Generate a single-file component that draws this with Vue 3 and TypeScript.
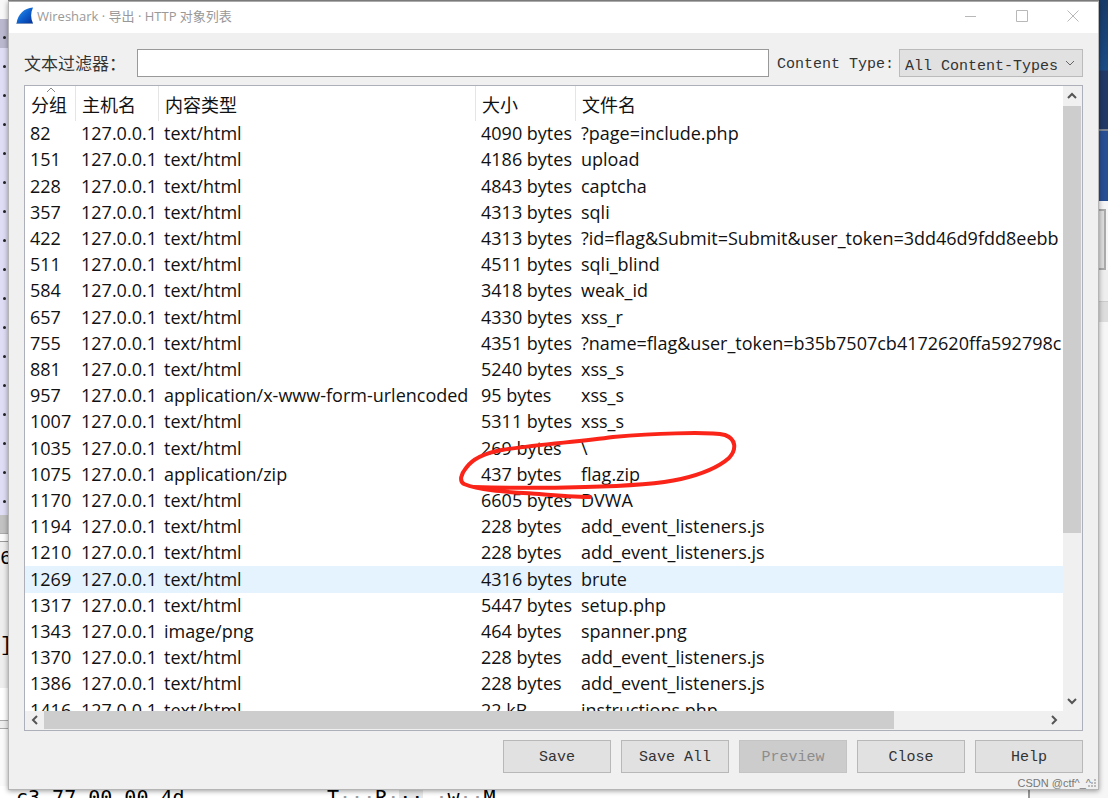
<script setup lang="ts">
import { ref } from 'vue'

type Row = [number, string, string, string]

const rows: Row[] = [
  [82, 'text/html', '4090 bytes', '?page=include.php'],
  [151, 'text/html', '4186 bytes', 'upload'],
  [228, 'text/html', '4843 bytes', 'captcha'],
  [357, 'text/html', '4313 bytes', 'sqli'],
  [422, 'text/html', '4313 bytes', '?id=flag&Submit=Submit&user_token=3dd46d9fdd8eebb'],
  [511, 'text/html', '4511 bytes', 'sqli_blind'],
  [584, 'text/html', '3418 bytes', 'weak_id'],
  [657, 'text/html', '4330 bytes', 'xss_r'],
  [755, 'text/html', '4351 bytes', '?name=flag&user_token=b35b7507cb4172620ffa592798c'],
  [881, 'text/html', '5240 bytes', 'xss_s'],
  [957, 'application/x-www-form-urlencoded', '95 bytes', 'xss_s'],
  [1007, 'text/html', '5311 bytes', 'xss_s'],
  [1035, 'text/html', '269 bytes', '\\'],
  [1075, 'application/zip', '437 bytes', 'flag.zip'],
  [1170, 'text/html', '6605 bytes', 'DVWA'],
  [1194, 'text/html', '228 bytes', 'add_event_listeners.js'],
  [1210, 'text/html', '228 bytes', 'add_event_listeners.js'],
  [1269, 'text/html', '4316 bytes', 'brute'],
  [1317, 'text/html', '5447 bytes', 'setup.php'],
  [1343, 'image/png', '464 bytes', 'spanner.png'],
  [1370, 'text/html', '228 bytes', 'add_event_listeners.js'],
  [1386, 'text/html', '228 bytes', 'add_event_listeners.js'],
  [1416, 'text/html', '22 kB', 'instructions.php'],
]

const filter = ref('')
const active = ref(1269)
const actions = [
  { label: 'Save', disabled: false },
  { label: 'Save All', disabled: false },
  { label: 'Preview', disabled: true },
  { label: 'Close', disabled: false },
  { label: 'Help', disabled: false },
]
</script>

<template>
  <div class="desktop">
    <div class="behind-left" aria-hidden="true">
      <div class="packets"><i v-for="n in 17" :key="n"></i></div>
      <div class="track"></div>
      <div class="details"><span>6</span><span>]</span></div>
      <div class="blank"></div>
      <div class="rule"></div>
    </div>
    <div class="behind-right" aria-hidden="true">
      <div class="sky"></div>
      <div class="edge"></div>
      <div class="pale"></div>
      <div class="grey"></div>
    </div>
    <div class="behind-bottom" aria-hidden="true">
      <span class="hex">c3 77 00 00 4d</span>
      <span class="ascii">T<s>···</s>R<s>·</s><mark>··</mark> <s>·</s>w<s>··</s>M</span>
      <span class="pane"></span>
    </div>

    <main class="dialog">
      <header class="titlebar">
        <svg class="fin" viewBox="0 0 18 18" aria-hidden="true">
          <defs>
            <linearGradient id="fin-fill" x1="0" y1="0" x2="1" y2="1">
              <stop offset="0" stop-color="#3b9bf0" />
              <stop offset="0.5" stop-color="#0d62cf" />
              <stop offset="1" stop-color="#06309a" />
            </linearGradient>
          </defs>
          <path d="M.5 16.500C2 7 8 1.200 17 .5C14.500 6 14.500 11 17 16.500Z" fill="url(#fin-fill)" />
          <path d="M.5 16.500h16.500" stroke="#7891b8" stroke-width="1" />
        </svg>
        <h1>Wireshark · 导出 · HTTP 对象列表</h1>
        <button class="wbtn" aria-label="Minimize"><svg viewBox="0 0 12 12"><path d="M0 6.500h11" /></svg></button>
        <button class="wbtn" aria-label="Maximize"><svg viewBox="0 0 12 12"><path d="M.5.5h11v11H.5z" /></svg></button>
        <button class="wbtn" aria-label="Close window"><svg viewBox="0 0 12 12"><path d="M.5.5l11 11M11.500.5l-11 11" /></svg></button>
      </header>

      <section class="content">
        <div class="filters">
          <label class="zh" for="filter">文本过滤器：</label>
          <input id="filter" v-model="filter" type="text" />
          <label class="type" for="ctype">Content Type:</label>
          <div class="select">
            <select id="ctype"><option>All Content-Types</option></select>
            <svg viewBox="0 0 10 6" aria-hidden="true"><path d="M1 1l4 4 4-4" /></svg>
          </div>
        </div>

        <div class="tree">
          <div class="view">
            <table>
              <colgroup><col class="c1" /><col class="c2" /><col class="c3" /><col class="c4" /><col /></colgroup>
              <thead>
                <tr>
                  <th class="sorted">分组<svg viewBox="0 0 10 6" aria-hidden="true"><path d="M1 5l4-4 4 4" /></svg></th>
                  <th>主机名</th><th>内容类型</th><th>大小</th><th>文件名</th>
                </tr>
              </thead>
              <tbody>
                <tr v-for="r in rows" :key="r[0]" :class="{ active: r[0] === active }" @click="active = r[0]">
                  <td>{{ r[0] }}</td><td>127.0.0.1</td><td>{{ r[1] }}</td><td>{{ r[2] }}</td><td>{{ r[3] }}</td>
                </tr>
              </tbody>
            </table>
            <svg class="scribble" viewBox="0 0 280 70" aria-hidden="true">
              <path d="M15 56C45 57 90 57 126 56C170 55 200 53 222 48C248 42 262 34 270 27C278 18 277 8 266 4C248 0 190 3 154 6C120 11 80 13 43 19C26 22 14 27 7 37C2 43 0 50 5 53C22 60 50 61 80 63C102 65 118 66 131 66" />
            </svg>
          </div>
          <div class="vbar">
            <button aria-label="Scroll up"><svg viewBox="0 0 10 8"><path d="M1 6l4-4 4 4" /></svg></button>
            <div class="lane"><div class="thumb"></div></div>
            <button aria-label="Scroll down"><svg viewBox="0 0 10 8"><path d="M1 2l4 4 4-4" /></svg></button>
          </div>
          <div class="hbar">
            <button aria-label="Scroll left"><svg viewBox="0 0 8 10"><path d="M6 1L2 5l4 4" /></svg></button>
            <div class="lane"><div class="thumb"></div></div>
            <button aria-label="Scroll right"><svg viewBox="0 0 8 10"><path d="M2 1l4 4-4 4" /></svg></button>
          </div>
        </div>

        <footer>
          <button v-for="a in actions" :key="a.label" :disabled="a.disabled">{{ a.label }}</button>
        </footer>
      </section>
      <svg class="grip" viewBox="0 0 8 8" aria-hidden="true"><path d="M6 0h2v2H6zM3 3h2v2H3zM6 3h2v2H6zM0 6h2v2H0zM3 6h2v2H3zM6 6h2v2H6z" /></svg>
      <span class="watermark">CSDN @ctf^_^</span>
    </main>
  </div>
</template>

<style>
html, body, #app { height: 100%; }
body { overflow: hidden; }
</style>

<style scoped>
* { box-sizing: border-box; }
.desktop {
  position: relative;
  height: 100%;
  padding: 1px 9px 8px 8px;
  background: linear-gradient(#858585, #fff 12px);
  overflow: hidden;
}
button { padding: 0; font: inherit; }
svg { fill: none; }

.behind-left {
  position: absolute;
  inset: 0 auto 0 0;
  width: 8px;
  display: flex;
  flex-direction: column;
  background: #fafafa;
}
.packets {
  height: 515px;
  padding-top: 36px;
  background: linear-gradient(#f8f8f8 19px, #bab8ce 19px, #bab8ce 48px, #dfddf5 48px);
}
.packets i {
  display: block;
  width: 3px;
  height: 3px;
  margin: 0 0 26px 3px;
  border-radius: 50%;
  background: #222;
}
.track { height: 19px; background: #c2c2c2; border-bottom: 1px solid #aaa; }
.details {
  height: 147px;
  margin-top: 7px;
  padding-top: 3px;
  border-top: 1px solid #999;
  background: #eee;
  font: 20px/28px "Liberation Mono", monospace;
  display: flex;
  flex-direction: column;
  gap: 59px;
}
.blank { height: 32px; background: #fff; }
.rule { height: 9px; border: 1px solid #aaa; border-width: 1px 0; background: #eee; }

.behind-right {
  position: absolute;
  inset: 0 0 0 auto;
  width: 9px;
  display: flex;
  flex-direction: column;
  background: #f6f6f6;
}
.sky { height: 201px; background: linear-gradient(#173b68, #1b4c85 70px, #203966 71px, #203966 129px, #7a8392 129px, #7a8392 131px, #284f94 131px); }
.edge { height: 61px; margin: 8px 2px 0 0; border: 2px solid #aaa; border-left: 0; background: #ddd; }
.pale { height: 32px; border: 1px solid #ccc; border-width: 0 0 1px; background: #eee; }
.grey { height: 20px; background: #ddd; }

.behind-bottom {
  position: absolute;
  inset: auto 0 0 0;
  height: 12px;
  display: grid;
  grid-template-columns: 311px 1fr 80px;
  padding-left: 16px;
  background: #fff;
  color: #000;
  font: 20px/22px "DejaVu Sans Mono", monospace;
  white-space: pre;
}
.behind-bottom s { text-decoration: none; color: #999; }
.behind-bottom mark { background: #e8e8e8; color: #000; }
.pane { border-left: 2px solid #999; background: #f6f6f6; }

.dialog {
  position: relative;
  height: 100%;
  display: flex;
  flex-direction: column;
  border: 1px solid #b5b5b5;
  border-top-color: #aaa;
  background: #f0f0f0;
  box-shadow: 0 1px 5px rgba(0, 0, 0, 0.4);
}
.titlebar {
  display: flex;
  align-items: center;
  height: 31px;
  flex: none;
  padding: 0 0 3px 7px;
  background: #fff;
}
.fin { width: 18px; height: 18px; }
h1 {
  flex: 1;
  margin: 0 0 0 3px;
  color: #999;
  font: 400 13px/18px "Open Sans", "Noto Sans CJK SC", sans-serif;
}
.wbtn { width: 51px; height: 28px; border: 0; background: none; }
.wbtn svg { display: block; width: 12px; height: 12px; margin: auto; stroke: #b8b8b8; }

.content {
  flex: 1;
  min-height: 0;
  display: flex;
  flex-direction: column;
  padding: 16px 15px;
}
.filters {
  display: flex;
  align-items: center;
  height: 28px;
  flex: none;
  margin-bottom: 8px;
  color: #333;
  font: 15px/28px "Liberation Mono", "Noto Sans CJK SC", monospace;
}
.filters .zh { width: 113px; white-space: nowrap; font: 400 17px/28px "Noto Sans CJK SC", sans-serif; }
.filters .type { padding-top: 3px; }
.filters input {
  flex: 1;
  min-width: 0;
  height: 28px;
  margin-right: 8px;
  padding: 0 6px;
  border: 1px solid #999;
  background: #fff;
  font: inherit;
}
.select { position: relative; width: 184px; margin-left: 5px; }
.select select {
  display: block;
  width: 100%;
  height: 28px;
  padding: 3px 0 0 5px;
  border: 1px solid #bbb;
  border-radius: 0;
  background: #e1e1e1;
  color: #333;
  font: inherit;
  appearance: none;
}
.select svg { position: absolute; right: 8px; top: 11px; width: 10px; height: 6px; stroke: #666; pointer-events: none; }

.tree {
  flex: 1;
  min-height: 0;
  display: grid;
  grid-template: minmax(0, 1fr) 19px / minmax(0, 1fr) 19px;
  border: 1px solid #adb0b8;
  background: #f0f0f0;
}
.view { position: relative; overflow: hidden; background: #fff; }
table {
  width: 100%;
  height: 638px;
  table-layout: fixed;
  border-collapse: separate;
  border-spacing: 0;
  color: #111;
  font: 18px/24px "Open Sans", "Noto Sans CJK SC", sans-serif;
  white-space: nowrap;
}
.c1 { width: 51px; }
.c2 { width: 83px; }
.c3 { width: 317px; }
.c4 { width: 100px; }
th {
  position: relative;
  height: 35px;
  padding: 2px 0 0 6px;
  border-right: 1px solid #e5e5e5;
  font-weight: 400;
  text-align: left;
}
th:last-child { border-right: 0; }
.sorted svg { position: absolute; top: 1px; left: 21px; width: 10px; height: 6px; stroke: #888; }
td { height: 26px; padding: 0 0 2px 5px; overflow: hidden; }
.active td { background: #e5f3ff; }

.scribble { position: absolute; top: 345px; left: 434px; width: 280px; height: 70px; overflow: visible; }
.scribble path { stroke: #fa2419; stroke-width: 4; stroke-linecap: round; stroke-linejoin: round; }

.vbar { display: flex; flex-direction: column; background: #f0f0f0; padding-right: 1px; }
.hbar { display: flex; background: #f0f0f0; padding-bottom: 1px; }
.lane { flex: 1; }
.thumb { background: #cdcdcd; }
.vbar .thumb { height: 73%; }
.hbar .thumb { width: 85%; height: 100%; }
.vbar button, .hbar button { border: 0; background: none; display: grid; place-items: center; }
.vbar button { height: 20px; }
.hbar button { width: 19px; }
.vbar svg { width: 10px; height: 8px; }
.hbar svg { width: 8px; height: 10px; }
.vbar svg, .hbar svg { stroke: #555; stroke-width: 2; }

footer { display: flex; justify-content: flex-end; gap: 10px; margin-top: 9px; }
footer button {
  width: 108px;
  height: 33px;
  padding-top: 3px;
  border: 1px solid #b8b8b8;
  background: #e1e1e1;
  color: #333;
  font: 15px/28px "Liberation Mono", monospace;
}
footer button:disabled { border-color: #c4c4c4; background: #ccc; color: #8c8c8c; }

.grip { position: absolute; right: 2px; bottom: 2px; width: 8px; height: 8px; fill: #bbb; }
.watermark {
  position: absolute;
  right: 7px;
  bottom: -1px;
  color: #777;
  font: 11px/14px "Liberation Sans", sans-serif;
}
</style>
